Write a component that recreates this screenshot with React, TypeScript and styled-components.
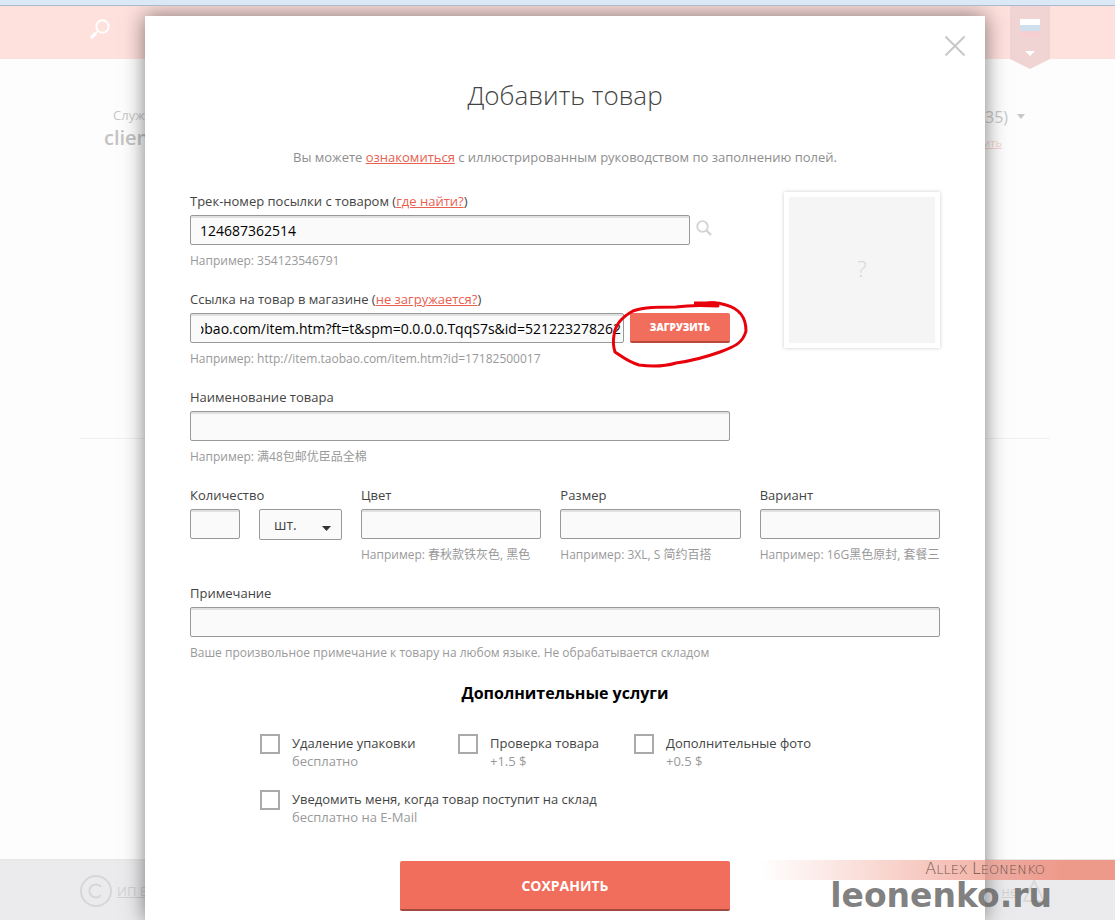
import React, { useEffect, useRef } from "react";
import styled, { createGlobalStyle } from "styled-components";

const GlobalStyle = createGlobalStyle`
  *, *::before, *::after { box-sizing: border-box; }
  body {
    margin: 0;
    background: #fdfdfd;
    font-family: "Open Sans", "Noto Sans CJK SC", sans-serif;
    font-size: 13px;
    line-height: 20px;
    color: #444;
  }
  input, select, button { font-family: inherit; margin: 0; }
`;

const Shell = styled.div`
  position: relative;
  min-height: 100vh;
  overflow: hidden;
`;

/* Faded page behind the dialog */
const Backdrop = styled.div`
  display: flex;
  flex-direction: column;
  min-height: 100vh;
`;

const BrowserEdge = styled.div`
  height: 6px;
  background: #dbe9f7;
  border-bottom: 1px solid #a9bccd;
`;

const SiteHeader = styled.header`
  display: flex;
  justify-content: space-between;
  height: 53px;
  padding: 0 65px 0 89px;
  background: #fee0dd;
`;

const SearchButton = styled.button`
  width: 22px;
  height: 22px;
  margin-top: 12px;
  padding: 0;
  border: 0;
  background: none;
`;

const Ribbon = styled.button`
  width: 40px;
  height: 63px;
  padding: 0;
  border: 0;
  background: none;
`;

const Account = styled.section`
  display: flex;
  justify-content: space-between;
  flex: 0 0 379px;
  padding: 46px 89px 0 104px;
  color: #c8c8c8;
`;

const ClientName = styled.div`
  color: #c4c4c4;
  font-size: 20px;
  line-height: 26px;
  font-weight: 600;
`;

const ClientKind = styled.div`
  padding-left: 9px;
`;

const Cart = styled.div`
  text-align: right;
`;

const CartTotal = styled.div`
  display: flex;
  align-items: center;
  gap: 8px;
  font-size: 16px;
  line-height: 24px;
`;

const FadedLink = styled.a`
  display: block;
  padding-right: 24px;
  font-size: 11px;
  line-height: 28px;
  color: #f6d5d1;
`;

const Divider = styled.hr`
  width: calc(100% - 145px);
  margin: 0 65px 0 80px;
  border: 0;
  border-top: 1px solid #f0f0f0;
`;

const SiteFooter = styled.footer`
  display: flex;
  justify-content: space-between;
  align-items: center;
  height: 61px;
  margin-top: auto;
  padding: 0 69px 0 80px;
  background: #ebebee;
  border-top: 2px solid #e8e8e8;
`;

const FooterGroup = styled.div`
  display: flex;
  align-items: center;
  gap: 5px;
`;

const FooterLink = styled.a`
  color: #d2d2d4;
  font-size: 13px;
`;

/* Dialog */
const Overlay = styled.div`
  position: absolute;
  inset: 6px 0 0;
  display: flex;
  justify-content: center;
  padding: 10px 0 0 15px;
  overflow: hidden;
`;

const Dialog = styled.main`
  position: relative;
  width: 840px;
  max-width: 100%;
  min-height: 100%;
  padding: 61px 45px 30px;
  background: #fff;
  box-shadow: 0 0 20px rgba(0, 0, 0, 0.5);
`;

const CloseButton = styled.button`
  position: absolute;
  top: 20px;
  right: 20px;
  width: 20px;
  height: 20px;
  padding: 0;
  border: 0;
  background: none;
`;

const Title = styled.h1`
  margin: 0 0 34px;
  font-size: 26px;
  line-height: 36px;
  font-weight: 300;
  text-align: center;
`;

const Intro = styled.p`
  margin: 0 0 24px;
  text-align: center;
  color: #8e8e8e;
`;

const Link = styled.a`
  color: #e8604f;
`;

const TopArea = styled.div`
  display: flex;
  justify-content: space-between;
`;

const MainFields = styled.div`
  width: 540px;
`;

const Field = styled.div`
  margin-bottom: 18px;
`;

const Label = styled.label`
  display: block;
  margin-bottom: 4px;
  white-space: nowrap;
`;

const Hint = styled.div`
  min-height: 20px;
  margin-top: 6px;
  font-size: 12px;
  color: #999;
  white-space: nowrap;
`;

const Row = styled.div<{ $gap: number }>`
  display: flex;
  gap: ${(p) => p.$gap}px;
`;

const TextBox = styled.input<{ $width?: string; $scrolled?: boolean }>`
  display: block;
  width: ${(p) => p.$width ?? "100%"};
  height: 30px;
  padding: ${(p) => (p.$scrolled ? "0 2px 0 10px" : "0 9px")};
  border: 1px solid #999;
  border-radius: 2px;
  background: #fafafa;
  box-shadow: inset 0 2px 0 #e0e0e0;
  font-size: 14px;
  color: #000;
`;

const InlineIconButton = styled.button`
  width: 16px;
  height: 16px;
  margin-top: 5px;
  padding: 0;
  border: 0;
  background: none;
`;

const ActionButton = styled.button<{ $large?: boolean }>`
  display: block;
  width: ${(p) => (p.$large ? 330 : 100)}px;
  height: ${(p) => (p.$large ? 50 : 30)}px;
  margin: ${(p) => (p.$large ? "35px auto 0" : "0")};
  padding: 0;
  border: 0;
  border-bottom: 2px solid ${(p) => (p.$large ? "#a24a3d" : "#b9493b")};
  border-radius: 2px;
  background: #f16e5c;
  color: #fff;
  font-size: ${(p) => (p.$large ? 14 : 10)}px;
  font-weight: ${(p) => (p.$large ? 700 : 800)};
`;

const MarkedAction = styled.div`
  position: relative;
`;

const PenMark = styled.svg`
  position: absolute;
  left: -20px;
  top: -15px;
  pointer-events: none;
`;

const Preview = styled.div`
  display: flex;
  align-items: center;
  justify-content: center;
  width: 156px;
  height: 156px;
  margin-top: 1px;
  padding-bottom: 4px;
  border: 5px solid #fff;
  background: #f5f5f5;
  box-shadow: 0 0 4px rgba(0, 0, 0, 0.2);
  color: #d5d5d5;
  font-size: 22px;
  font-weight: 300;
`;

const Columns = styled.div`
  display: grid;
  grid-template-columns: 152px 1fr 1fr 1fr;
  column-gap: 19px;
`;

const SelectWrap = styled.div`
  position: relative;
`;

const UnitSelect = styled.select`
  appearance: none;
  display: block;
  width: 83px;
  height: 31px;
  padding: 0 14px;
  border: 1px solid #999;
  border-radius: 2px;
  background: #fafafa;
  font-size: 14px;
  color: #444;
`;

const SelectArrow = styled.svg`
  position: absolute;
  right: 11px;
  top: 17px;
  pointer-events: none;
`;

const ServicesTitle = styled.h2`
  margin: 0 0 29px;
  font-size: 16px;
  line-height: 24px;
  font-weight: 700;
  color: #000;
  text-align: center;
`;

const Services = styled.div`
  display: grid;
  grid-template-columns: 198px 176px auto;
  row-gap: 20px;
  padding-left: 70px;
`;

const Service = styled.label<{ $wide?: boolean }>`
  display: flex;
  gap: 12px;
  grid-column: ${(p) => (p.$wide ? "1 / -1" : "auto")};
  line-height: 18px;
  white-space: nowrap;
`;

const Tick = styled.input`
  appearance: none;
  flex: none;
  width: 20px;
  height: 20px;
  border: 2px solid #aaa;
  background: #fff;
`;

const Price = styled.span`
  display: block;
  color: #999;
`;

/* Author's stamp over the lower right corner */
const Stamp = styled.aside`
  position: absolute;
  right: 0;
  bottom: 0;
  width: 355px;
  height: 60px;
`;

const StampBand = styled.div`
  height: 20px;
  padding-right: 70px;
  background: linear-gradient(to right, rgba(238, 145, 128, 0), rgba(238, 145, 128, 0.9) 85%);
  color: #705550;
  font-family: "DejaVu Sans", sans-serif;
  font-size: 13px;
  line-height: 18px;
  font-weight: 200;
  text-transform: uppercase;
  text-align: right;
`;

const Initial = styled.span`
  font-size: 16px;
`;

const StampSite = styled.div`
  padding-right: 63px;
  font-family: "DejaVu Sans", sans-serif;
  font-size: 33px;
  line-height: 32px;
  font-weight: 700;
  color: rgba(100, 100, 100, 0.82);
  text-align: right;
`;

const Magnifier = () => (
  <svg width="16" height="16" viewBox="0 0 16 16" fill="none" stroke="#d4d4d4">
    <circle cx="6.5" cy="6.5" r="5.3" strokeWidth="1.8" />
    <path d="M10.5 10.5 L15 15" strokeWidth="2.4" />
  </svg>
);

const services = [
  { name: "Удаление упаковки", price: "бесплатно" },
  { name: "Проверка товара", price: "+1.5 $" },
  { name: "Дополнительные фото", price: "+0.5 $" },
  { name: "Уведомить меня, когда товар поступит на склад", price: "бесплатно на E-Mail", wide: true },
];

const details = [
  { id: "color", label: "Цвет", hint: "春秋款铁灰色, 黑色" },
  { id: "size", label: "Размер", hint: "3XL, S 简约百搭" },
  { id: "variant", label: "Вариант", hint: "16G黑色原封, 套餐三" },
];

export default function App() {
  const urlRef = useRef<HTMLInputElement>(null);

  // Keep the end of the long address in view.
  useEffect(() => {
    const el = urlRef.current;
    if (el) el.scrollLeft = el.scrollWidth;
  }, []);

  return (
    <Shell>
      <GlobalStyle />
      <Backdrop>
        <BrowserEdge />
        <SiteHeader>
          <SearchButton aria-label="Поиск">
            <svg width="22" height="22" viewBox="0 0 22 22" fill="none" stroke="#fff">
              <circle cx="13.5" cy="8.5" r="6.2" strokeWidth="2" />
              <path d="M7 15 L2 20" strokeWidth="3.2" />
              <path d="M9 13 L7 15" strokeWidth="1.6" />
            </svg>
          </SearchButton>
          <Ribbon aria-label="Язык">
            <svg width="40" height="63" viewBox="0 0 40 63">
              <path d="M0 0H40V53L20 63L0 53Z" fill="#f0d4d3" />
              <path d="M10 13H30V19H10Z" fill="#fff" />
              <path d="M10 19H30V25H10Z" fill="#cfdfec" />
              <path d="M10 25H30V31H10Z" fill="#f6d0d0" />
              <path d="M15 45H25L20 50Z" fill="#fff" />
            </svg>
          </Ribbon>
        </SiteHeader>
        <Account>
          <div>
            <ClientKind>Служ</ClientKind>
            <ClientName>clien</ClientName>
          </div>
          <Cart>
            <CartTotal>
              (35)
              <svg width="10" height="6" viewBox="0 0 10 6">
                <path d="M1 0H9L5 5Z" fill="#c8c8c8" />
              </svg>
            </CartTotal>
            <FadedLink href="#pay">ить</FadedLink>
          </Cart>
        </Account>
        <Divider />
        <SiteFooter>
          <FooterGroup>
            <svg width="32" height="32" viewBox="0 0 32 32" fill="none" stroke="#d6d6d8" strokeWidth="2">
              <circle cx="16" cy="16" r="15" />
              <path d="M21 12A6.5 6.5 0 1 0 21 20" />
            </svg>
            <FooterLink href="#owner">ИП В</FooterLink>
          </FooterGroup>
          <FooterGroup>
            <FooterLink href="#report">не</FooterLink>
            <svg width="24" height="24" viewBox="0 0 24 24" fill="none" stroke="#d8d8da" strokeWidth="2">
              <path d="M12 2L22 22H2Z M12 9V16 M12 18V20" />
            </svg>
          </FooterGroup>
        </SiteFooter>
      </Backdrop>

      <Overlay>
        <Dialog>
          <CloseButton aria-label="Закрыть">
            <svg width="20" height="20" viewBox="0 0 20 20" stroke="#c8c8c8" strokeWidth="2">
              <path d="M0.5 0.5L19.5 19.5M19.5 0.5L0.5 19.5" />
            </svg>
          </CloseButton>
          <Title>Добавить товар</Title>
          <Intro>
            Вы можете <Link href="#guide">ознакомиться</Link> с иллюстрированным руководством по заполнению полей.
          </Intro>

          <TopArea>
            <MainFields>
              <Field>
                <Label htmlFor="track">
                  Трек-номер посылки с товаром (<Link href="#track-help">где найти?</Link>)
                </Label>
                <Row $gap={6}>
                  <TextBox id="track" $width="500px" defaultValue="124687362514" />
                  <InlineIconButton aria-label="Найти">
                    <Magnifier />
                  </InlineIconButton>
                </Row>
                <Hint>Например: 354123546791</Hint>
              </Field>
              <Field>
                <Label htmlFor="url">
                  Ссылка на товар в магазине (<Link href="#url-help">не загружается?</Link>)
                </Label>
                <Row $gap={6}>
                  <TextBox
                    id="url"
                    ref={urlRef}
                    $width="434px"
                    $scrolled
                    defaultValue="http://item.taobao.com/item.htm?ft=t&spm=0.0.0.0.TqqS7s&id=521223278262"
                  />
                  <MarkedAction>
                    <ActionButton type="button">ЗАГРУЗИТЬ</ActionButton>
                    <PenMark width="140" height="74" viewBox="0 0 140 74" fill="none" stroke="#e8000b" strokeWidth="3" strokeLinejoin="round" strokeLinecap="round">
                      <path d="M108 8C92 7 79 7 66 9C48 9 34 9 23 13C12 19 5 27 4 37C3 43 3 48 5 54C11 58 18 64 29 67C43 69 56 68 66 65C81 63 96 59 110 54C124 49 133 45 136 33C136 19 130 11 116 7C110 5 105 4 98 5" />
                      <path d="M84 6H106" strokeWidth="5" strokeLinecap="butt" />
                    </PenMark>
                  </MarkedAction>
                </Row>
                <Hint>Например: http://item.taobao.com/item.htm?id=17182500017</Hint>
              </Field>
              <Field>
                <Label htmlFor="name">Наименование товара</Label>
                <TextBox id="name" />
                <Hint>Например: 满48包邮优臣品全棉</Hint>
              </Field>
            </MainFields>
            <Preview>?</Preview>
          </TopArea>

          <Columns>
            <Field>
              <Label htmlFor="count">Количество</Label>
              <Row $gap={19}>
                <TextBox id="count" $width="50px" />
                <SelectWrap>
                  <UnitSelect aria-label="Единица">
                    <option>шт.</option>
                  </UnitSelect>
                  <SelectArrow width="9" height="5" viewBox="0 0 9 5">
                    <path d="M0 0H9L4.5 5Z" fill="#333" />
                  </SelectArrow>
                </SelectWrap>
              </Row>
            </Field>
            {details.map((d) => (
              <Field key={d.id}>
                <Label htmlFor={d.id}>{d.label}</Label>
                <TextBox id={d.id} />
                <Hint>Например: {d.hint}</Hint>
              </Field>
            ))}
          </Columns>

          <Field>
            <Label htmlFor="note">Примечание</Label>
            <TextBox id="note" />
            <Hint>Ваше произвольное примечание к товару на любом языке. Не обрабатывается складом</Hint>
          </Field>

          <ServicesTitle>Дополнительные услуги</ServicesTitle>
          <Services>
            {services.map((s) => (
              <Service key={s.name} $wide={s.wide}>
                <Tick type="checkbox" />
                <span>
                  {s.name}
                  <Price>{s.price}</Price>
                </span>
              </Service>
            ))}
          </Services>
          <ActionButton type="submit" $large>
            СОХРАНИТЬ
          </ActionButton>
        </Dialog>
      </Overlay>

      <Stamp>
        <StampBand>
          <Initial>A</Initial>llex <Initial>L</Initial>eonenko
        </StampBand>
        <StampSite>leonenko.ru</StampSite>
      </Stamp>
    </Shell>
  );
}
